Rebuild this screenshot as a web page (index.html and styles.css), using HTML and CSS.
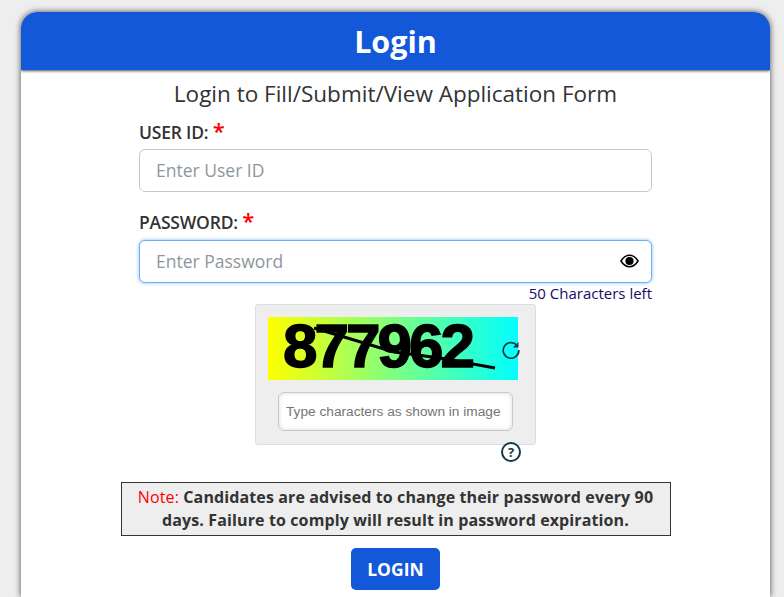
FILE: index.html
```html
<!DOCTYPE html>
<html lang="en">
<head>
    <meta charset="UTF-8">
    <meta name="viewport" content="width=device-width, initial-scale=1.0">
    <title>Login</title>
    <link rel="stylesheet" href="styles.css">
</head>
<body>
    <div class="card">
        <div class="card-head">Login</div>
        <div class="card-body">
            <h2 class="form-title">Login to Fill/Submit/View Application Form</h2>
            <form class="login-form">
                <label class="field-label">USER ID: <span class="req">*</span></label>
                <input class="field-input" type="text" placeholder="Enter User ID">

                <label class="field-label pass-label">PASSWORD: <span class="req">*</span></label>
                <div class="pass-wrap">
                    <input class="field-input focused" type="password" placeholder="Enter Password">
                    <svg class="eye" viewBox="0 0 20 14" width="19" height="14">
                        <path d="M1 7C3.500 3 6.500 1 10 1s6.500 2 9 6c-2.500 4-5.500 6-9 6S3.500 11 1 7z" fill="#fff" stroke="#000" stroke-width="1.600"/>
                        <circle cx="10" cy="7" r="4.300" fill="#000"/>
                    </svg>
                </div>
                <div class="chars-left">50 Characters left</div>

                <div class="captcha-box">
                    <div class="captcha-img">
                        <span class="captcha-text">877962</span>
                        <svg class="captcha-lines" viewBox="0 0 250 63" width="250" height="63">
                            <path d="M46 11L126 35L172 41L227 51" fill="none" stroke="#000" stroke-width="3"/>
                        </svg>
                        <svg class="refresh" viewBox="0 0 18 18" width="18" height="18">
                            <path d="M14.800 4.200A7.800 7.800 0 1 0 16.800 9" fill="none" stroke="#17384a" stroke-width="1.700"/>
                            <path d="M16.500 1V6.500H11z" fill="#17384a"/>
                        </svg>
                    </div>
                    <input class="captcha-input" type="text" placeholder="Type characters as shown in image">
                </div>
                <div class="help-row">
                    <span class="help">?</span>
                </div>
            </form>
            <div class="note"><span class="note-red">Note:</span> <b>Candidates are advised to change their password every 90 days. Failure to comply will result in password expiration.</b></div>
            <button class="login-btn" type="button">LOGIN</button>
        </div>
    </div>
</body>
</html>
```

FILE: styles.css
```css
html, body {
    height: 100%;
}
body {
    margin: 0;
    padding: 12px 14px 0 21px;
    box-sizing: border-box;
    background-color: #eee;
    font-family: "Open Sans", sans-serif;
    color: #333;
    overflow: hidden;
}
.card {
    background-color: #fff;
    border-radius: 16px 16px 0 0;
    box-shadow: 0 0 6px rgba(0, 0, 0, 0.7);
    height: 585px;
    overflow: hidden;
}
.card-head {
    height: 58px;
    line-height: 58px;
    text-align: center;
    background-color: #1258d8;
    color: #fff;
    font-size: 30.5px;
    font-weight: 700;
    border-radius: 16px 16px 0 0;
    box-shadow: 0 1px 3px rgba(0, 0, 0, 0.7);
}
.card-body {
    display: flex;
    flex-direction: column;
    align-items: center;
}
.form-title {
    margin: 6px 0 0;
    font-size: 22.5px;
    font-weight: 400;
    line-height: 35px;
}
.login-form {
    width: 513px;
    display: flex;
    flex-direction: column;
}
.field-label {
    display: block;
    font-size: 17.5px;
    font-weight: 600;
    line-height: 26px;
    letter-spacing: -0.2px;
    margin-top: 8px;
    margin-bottom: 4px;
}
.pass-label {
    margin-top: 17px;
    margin-bottom: 5px;
}
.req {
    color: #f00;
    font-size: 22px;
    line-height: 20px;
}
.field-input {
    display: block;
    width: 100%;
    height: 43px;
    box-sizing: border-box;
    padding: 0 16px 2px;
    border: 1px solid #c5c9ce;
    border-radius: 6px;
    font-family: inherit;
    font-size: 17.5px;
    outline: none;
}
.field-input::placeholder {
    color: #8f969d;
}
.focused {
    border-color: #6db0f5;
    box-shadow: 0 0 3px 1px rgba(110, 176, 245, 0.5);
}
.pass-wrap {
    position: relative;
}
.eye {
    position: absolute;
    right: 13px;
    top: 14px;
}
.chars-left {
    text-align: right;
    font-size: 15px;
    line-height: 20px;
    color: #1a0a66;
}
.captcha-box {
    align-self: center;
    width: 281px;
    height: 141px;
    margin-top: 1px;
    box-sizing: border-box;
    background-color: #eee;
    border: 1px solid #ddd;
    border-radius: 3px;
    padding: 12px;
    display: flex;
    flex-direction: column;
    align-items: center;
    gap: 12px;
}
.captcha-img {
    position: relative;
    align-self: flex-start;
    width: 250px;
    height: 63px;
    flex: none;
    background: linear-gradient(90deg, #ff0 0%, #0ff 100%);
}
.captcha-text {
    position: absolute;
    left: 15px;
    top: 1px;
    font-family: "Liberation Sans", sans-serif;
    font-size: 62px;
    line-height: 55px;
    font-weight: 700;
    letter-spacing: -3px;
    color: #000;
    -webkit-text-stroke: 1.5px #000;
}
.captcha-lines {
    position: absolute;
    left: 0;
    top: 0;
}
.refresh {
    position: absolute;
    right: -2px;
    top: 24px;
}
.captcha-input {
    display: block;
    width: 235px;
    height: 39px;
    flex: none;
    box-sizing: border-box;
    padding: 0 7px;
    background-color: #fff;
    border: 1px solid #c5c9ce;
    border-radius: 6px;
    box-shadow: inset 0 0 4px rgba(0, 0, 0, 0.15);
    font-family: "Liberation Sans", sans-serif;
    font-size: 13.7px;
}
.captcha-input::placeholder {
    color: #757575;
}
.help-row {
    width: 281px;
    align-self: center;
    height: 20px;
    margin-top: -3px;
    display: flex;
    justify-content: flex-end;
    padding-right: 15px;
    box-sizing: border-box;
}
.help {
    width: 20px;
    height: 20px;
    box-sizing: border-box;
    border: 2px solid #17384a;
    border-radius: 50%;
    text-align: center;
    font-size: 13px;
    font-weight: 700;
    line-height: 16px;
    color: #17384a;
    background-color: #fff;
}
.note {
    width: 550px;
    box-sizing: border-box;
    margin-top: 20px;
    border: 1px solid #333;
    background-color: #eee;
    padding: 3px 10px 0;
    text-align: center;
    font-size: 16px;
    line-height: 23px;
    letter-spacing: 0.12px;
    height: 54px;
}
.note-red {
    color: #f00;
}
.login-btn {
    margin-top: 12px;
    width: 89px;
    height: 42px;
    border: none;
    border-radius: 5px;
    background-color: #1258d8;
    color: #fff;
    font-family: inherit;
    font-size: 17.5px;
    font-weight: 700;
}
```
